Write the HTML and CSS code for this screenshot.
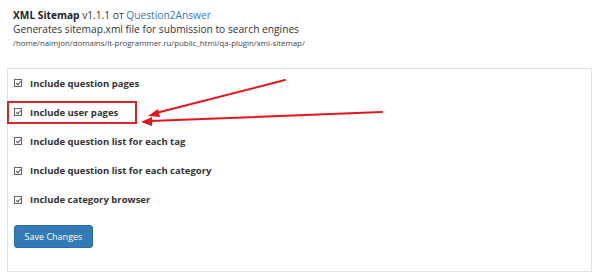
FILE: index.html
```html
<!DOCTYPE html>
<html>
<head>
<meta charset="utf-8">
<link rel="stylesheet" href="styles.css">
</head>
<body>
<div class="page">
  <div class="head">
    <div class="title"><b>XML Sitemap</b> v1.1.1 от <a href="#">Question2Answer</a></div>
    <div class="desc">Generates sitemap.xml file for submission to search engines</div>
    <div class="path">/home/naimjon/domains/it-programmer.ru/public_html/qa-plugin/xml-sitemap/</div>
  </div>
  <div class="panel">
    <div class="opt"><span class="cb"></span>Include question pages</div>
    <div class="opt hl"><span class="cb"></span>Include user pages</div>
    <div class="opt"><span class="cb"></span>Include question list for each tag</div>
    <div class="opt"><span class="cb"></span>Include question list for each category</div>
    <div class="opt"><span class="cb"></span>Include category browser</div>
    <button class="btn">Save Changes</button>
  </div>
  <svg class="arrows" width="600" height="277" viewBox="0 0 600 277">
    <g fill="none" stroke="#e3161d" stroke-width="2" stroke-linecap="round">
      <line x1="285" y1="80" x2="156" y2="113"/>
      <line x1="382" y1="112" x2="150" y2="121"/>
    </g>
    <g fill="#e3161d">
      <polygon points="148,116 158,109 160,117"/>
      <polygon points="141,122 152,117 152,126"/>
    </g>
  </svg>
</div>
</body>
</html>
```
FILE: styles.css
```css
* { box-sizing: border-box; }
html, body { margin: 0; padding: 0; background: #fff; }
body { font-family: "Open Sans", "DejaVu Sans", sans-serif; color: #333; }
.page { position: relative; width: 600px; height: 277px; padding: 8px 8px 0 7px; }
.head { padding-left: 6px; }
.title { font-size: 10.2px; line-height: 14px; }
.title b { font-weight: 700; color: #222; }
.title a { color: #337ab7; text-decoration: none; }
.desc { font-size: 10.2px; line-height: 14px; }
.path { font-size: 7.85px; line-height: 14px; color: #444; }
.panel { margin-top: 18px; width: 585px; height: 204px; border: 1px solid #e2e2e2; padding: 2.5px 0 0 5px; }
.opt { display: flex; align-items: center; height: 23px; margin-bottom: 6.2px; padding-left: 1px; font-size: 9.5px; font-weight: 700; color: #333; width: 130px; white-space: nowrap; }
.opt.hl { outline: 2px solid #d8262b; outline-offset: -2px; margin-left: -6px; padding-left: 7px; width: 130px; }
.cb { width: 8px; height: 8px; border: 1px solid #666; margin-right: 8px; position: relative; flex: none; }
.cb::after { content: ""; position: absolute; left: 2px; top: 0px; width: 2px; height: 4px; border: solid #555; border-width: 0 1px 1px 0; transform: rotate(40deg); }
.btn { display: block; margin-top: 14px; margin-left: 1px; background: #337ab7; color: #fff; border: 1px solid #2e6da4; border-radius: 3px; font-family: "Open Sans", sans-serif; font-size: 9px; height: 23px; width: 79px; padding: 0; }
.arrows { position: absolute; left: 0; top: 0; pointer-events: none; }
```
